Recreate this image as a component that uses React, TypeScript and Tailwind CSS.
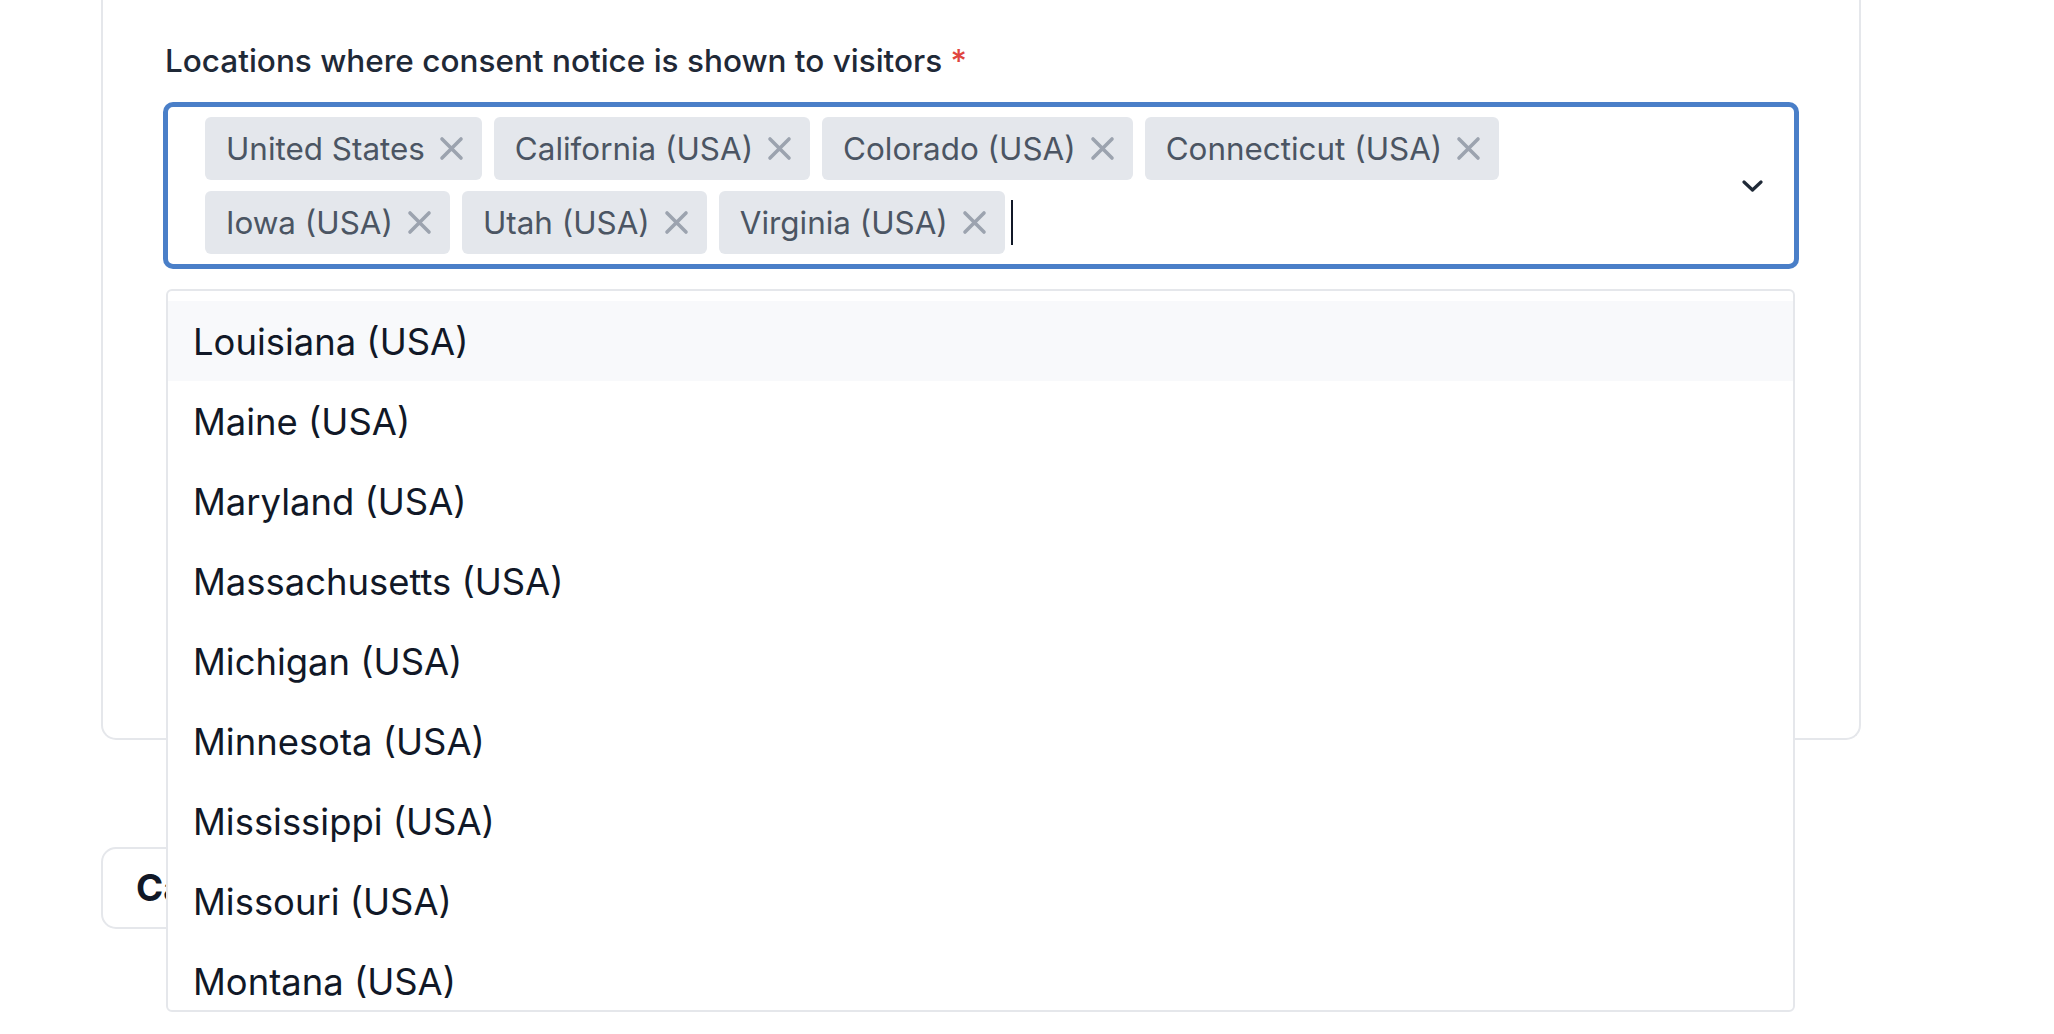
import React from "react";

const row1 = ["United States", "California (USA)", "Colorado (USA)", "Connecticut (USA)"];
const row2 = ["Iowa (USA)", "Utah (USA)", "Virginia (USA)"];
const options = [
  "Louisiana (USA)",
  "Maine (USA)",
  "Maryland (USA)",
  "Massachusetts (USA)",
  "Michigan (USA)",
  "Minnesota (USA)",
  "Mississippi (USA)",
  "Missouri (USA)",
  "Montana (USA)",
];

function XIcon() {
  return (
    <svg width="25" height="25" viewBox="0 0 25 25" className="shrink-0">
      <path d="M3 3 L22 22 M22 3 L3 22" stroke="#9ca3af" strokeWidth="3.6" strokeLinecap="round" fill="none" />
    </svg>
  );
}

function Tag({ label }: { label: string }) {
  return (
    <div className="flex h-[63px] items-center gap-[14px] rounded-[6px] bg-[#e4e7ec] pl-[21px] pr-[18px]">
      <span className="pt-[2px] text-[31.4px] leading-none text-[#4b5563]">{label}</span>
      <XIcon />
    </div>
  );
}

export default function App() {
  return (
    <div className="min-h-screen bg-white" style={{ fontFamily: "Inter, 'Noto Sans', sans-serif" }}>
      <div className="pl-[101px] pr-[193px]">
        <div className="rounded-b-[15px] border-x-2 border-b-2 border-[#e5e7eb] px-[62px] pt-[37px] pb-[471px]">
          <div className="text-[31.5px] font-medium leading-[48px] text-[#1f2937]">
            Locations where consent notice is shown to visitors <span className="text-[#e0453f]">*</span>
          </div>
          <div className="relative mt-[19px]">
            <div className="flex h-[163px] items-center rounded-[8px] border-[3px] border-[#4a7fc8] bg-white shadow-[0_0_0_2px_#4a7fc8]">
              <div className="flex flex-1 flex-col gap-[11px] pl-[37px]">
                <div className="flex items-center gap-[12px]">
                  {row1.map((t) => (
                    <Tag key={t} label={t} />
                  ))}
                </div>
                <div className="flex items-center gap-[12px]">
                  {row2.map((t) => (
                    <Tag key={t} label={t} />
                  ))}
                  <div className="-ml-[6px] h-[45px] w-[2.5px] bg-[#111827]" />
                </div>
              </div>
              <div className="flex w-[84px] items-center justify-center self-stretch">
                <svg width="21" height="12" viewBox="0 0 21 12">
                  <path d="M2 2 L10.5 10 L19 2" stroke="#1f2937" strokeWidth="3.2" strokeLinecap="round" strokeLinejoin="round" fill="none" />
                </svg>
              </div>
            </div>
            <div className="absolute left-[1px] right-[2px] top-[calc(100%+22px)] z-10 h-[723px] overflow-hidden rounded-[6px] border-2 border-[#e5e7eb] bg-white pt-[10px]">
              {options.map((o, i) => (
                <div
                  key={o}
                  className={`flex h-[80px] items-center pl-[25px] pt-[2px] text-[36.4px] leading-none text-[#111827] ${i === 0 ? "bg-[#f8f9fb]" : ""}`}
                >
                  {o}
                </div>
              ))}
            </div>
          </div>
        </div>
        <div className="mt-[107px]">
          <button className="flex h-[82px] items-center rounded-[15px] border-2 border-[#e5e7eb] bg-white px-[33px] text-[36.8px] font-bold text-[#111827]">
            Cancel
          </button>
        </div>
      </div>
    </div>
  );
}
